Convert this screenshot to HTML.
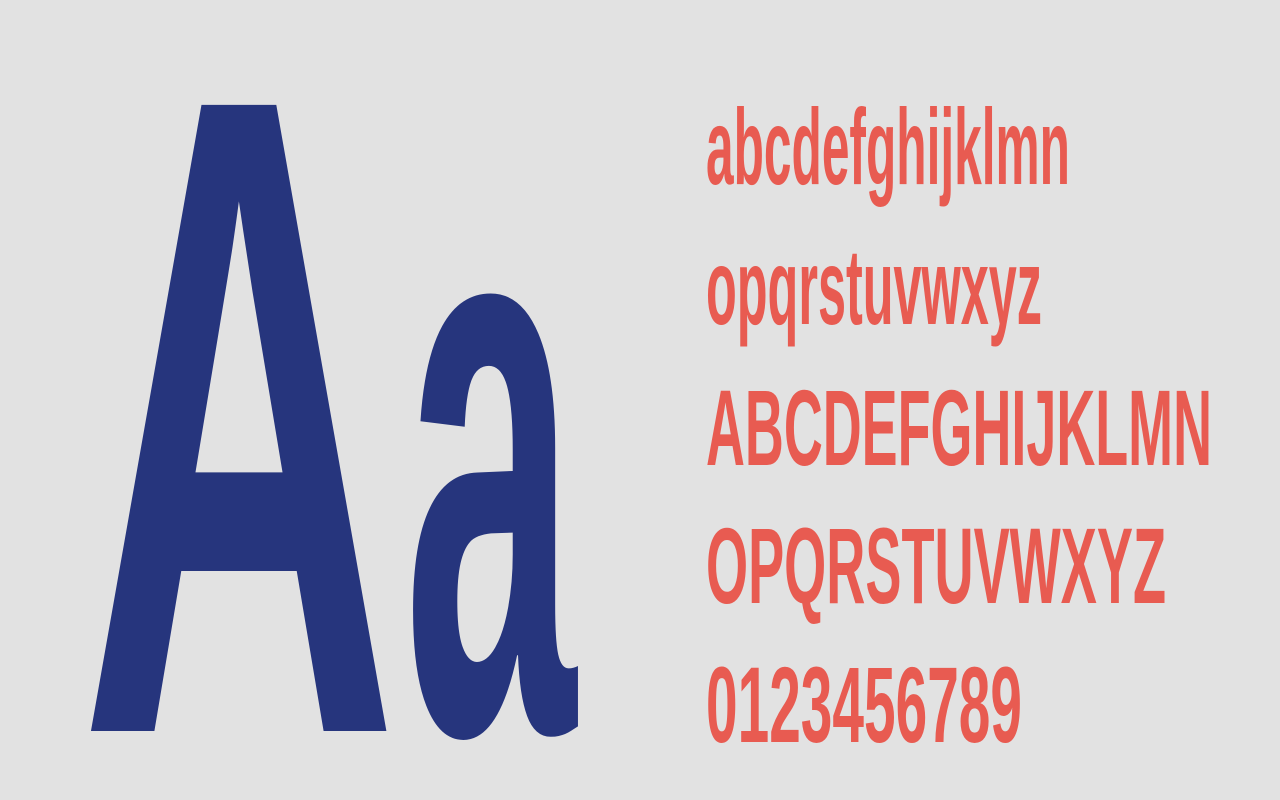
<!DOCTYPE html>
<html><head><meta charset="utf-8"><style>
html,body{margin:0;padding:0;background:#e2e2e2;overflow:hidden;width:1280px;height:800px;}
svg{display:block}
</style></head><body>
<svg width="1280" height="800" viewBox="0 0 1280 800" xmlns="http://www.w3.org/2000/svg" style="overflow:hidden">
<rect width="1280" height="800" fill="#e2e2e2"/>
<g font-family="Liberation Sans, sans-serif" font-weight="bold" fill="#26357d">
<text x="80" y="731" font-size="910" textLength="318" lengthAdjust="spacingAndGlyphs">A</text>
<text x="404" y="732" font-size="815" textLength="172" lengthAdjust="spacingAndGlyphs">a</text>
</g>
<g font-family="Liberation Sans, sans-serif" font-weight="bold" fill="#e85b51" font-size="108">
<text x="706" y="184" textLength="364" lengthAdjust="spacingAndGlyphs">abcdefghijklmn</text>
<text x="706" y="324" textLength="336" lengthAdjust="spacingAndGlyphs">opqrstuvwxyz</text>
<text x="706" y="465" textLength="506" lengthAdjust="spacingAndGlyphs">ABCDEFGHIJKLMN</text>
<text x="706" y="603" textLength="460" lengthAdjust="spacingAndGlyphs">OPQRSTUVWXYZ</text>
<text x="706" y="742" textLength="316" lengthAdjust="spacingAndGlyphs">0123456789</text>
</g>
</svg>
</body></html>
